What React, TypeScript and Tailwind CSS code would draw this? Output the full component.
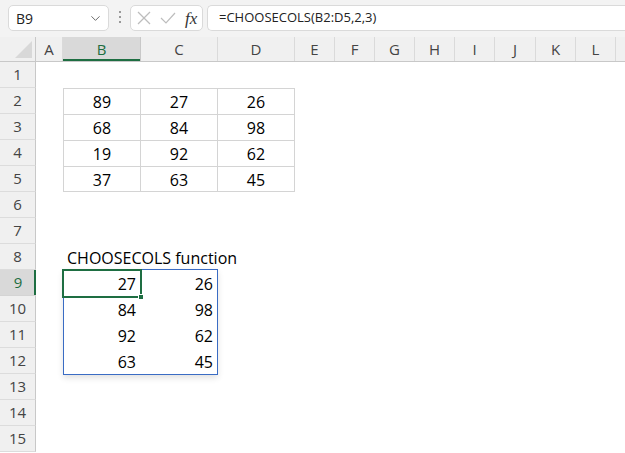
import { ChevronDown } from "lucide-react";

const cols = [
  { id: "A", w: "w-[27px]" },
  { id: "B", w: "w-[78px]" },
  { id: "C", w: "w-[77px]" },
  { id: "D", w: "w-[77px]" },
  { id: "E", w: "w-[40px]" },
  { id: "F", w: "w-[40px]" },
  { id: "G", w: "w-[40px]" },
  { id: "H", w: "w-[40px]" },
  { id: "I", w: "w-[40px]" },
  { id: "J", w: "w-[41px]" },
  { id: "K", w: "w-[40px]" },
  { id: "L", w: "w-[40px]" },
  { id: "", w: "w-[40px]" },
];

// source table B2:D5
const table: Record<number, string[]> = {
  2: ["89", "27", "26"],
  3: ["68", "84", "98"],
  4: ["19", "92", "62"],
  5: ["37", "63", "45"],
};

// spilled result B9:C12
const spill: Record<number, string[]> = {
  9: ["27", "26"],
  10: ["84", "98"],
  11: ["92", "62"],
  12: ["63", "45"],
};

const rows = Array.from({ length: 15 }, (_, i) => i + 1);

function Cell({ row, col }: { row: number; col: number }) {
  const c = cols[col];
  const inTable = table[row] && col >= 1 && col <= 3;
  const inSpill = spill[row] && col >= 1 && col <= 2;
  const borders = inTable
    ? `border-r border-t border-[#d4d4d4] ${col === 1 ? "border-l" : ""} ${row === 5 ? "border-b" : ""}`
    : "";

  if (row === 8 && col === 1) {
    return (
      <div className={`${c.w} h-[26px] shrink-0 relative`}>
        <span className="absolute left-[4px] top-[2px] whitespace-nowrap text-[16px] text-black">CHOOSECOLS function</span>
      </div>
    );
  }

  return (
    <div className={`${c.w} h-[26px] shrink-0 flex items-center pt-[1px] text-[16px] text-black ${borders} ${inTable ? "justify-center" : "justify-end pr-[5px]"}`}>
      {inTable && table[row][col - 1]}
      {inSpill && spill[row][col - 1]}
    </div>
  );
}

export default function App() {
  return (
    <div className="w-[625px] h-[453px] overflow-hidden bg-white font-['Open_Sans',sans-serif]">
      {/* Formula bar */}
      <div className="h-[37px] bg-[#f3f3f3] flex items-start pt-[5px]">
        <div className="ml-[8px] w-[101px] h-[26px] bg-white border border-[#dadada] rounded-[5px] flex items-center justify-between pl-[7px] pr-[5px]">
          <span className="text-[14px] text-[#222]">B9</span>
          <ChevronDown size={15} strokeWidth={1.4} className="text-[#555]" />
        </div>
        <div className="ml-[10px] mt-[6px] flex flex-col gap-[3px]">
          <div className="w-[2px] h-[2px] bg-[#999]" />
          <div className="w-[2px] h-[2px] bg-[#999]" />
          <div className="w-[2px] h-[2px] bg-[#999]" />
        </div>
        <div className="ml-[9px] w-[73px] h-[26px] bg-white border border-[#dadada] rounded-[5px] flex items-center pl-[6px]">
          <svg width="14" height="14" viewBox="0 0 14 14" fill="none" stroke="#bdbdbd" strokeWidth="1.2">
            <line x1="1" y1="1" x2="13" y2="13" />
            <line x1="13" y1="1" x2="1" y2="13" />
          </svg>
          <svg width="16" height="12" viewBox="0 0 16 12" fill="none" stroke="#bdbdbd" strokeWidth="1.2" className="ml-[9px]">
            <polyline points="1,6 6,11 15,1" />
          </svg>
          <span className="ml-[9px] font-['Liberation_Serif',serif] italic text-[17px] text-[#333] leading-none">fx</span>
        </div>
        <div className="ml-[4px] flex-1 h-[26px] bg-white border border-r-0 border-[#dadada] rounded-l-[5px] flex items-center pl-[11px]">
          <span className="text-[13px] text-[#222]">=CHOOSECOLS(B2:D5,2,3)</span>
        </div>
      </div>

      {/* Sheet */}
      <div className="relative">
        {/* Column headers */}
        <div className="flex h-[25px] bg-[#f0f0f0] border-b border-[#c8c8c8]">
          <div className="w-[36px] shrink-0 border-r border-[#c8c8c8] flex items-end justify-end pr-[3px] pb-[3px]">
            <svg width="17" height="17" viewBox="0 0 17 17">
              <polygon points="17,0 17,17 0,17" fill="#d8d8d8" />
            </svg>
          </div>
          {cols.map((c, i) => (
            <div
              key={i}
              className={`${c.w} shrink-0 flex items-center justify-center text-[15px] border-r ${
                c.id === "B"
                  ? "bg-[#d9d9d9] text-[#1e6e42] border-[#c8c8c8] shadow-[inset_0_-2px_0_#1e6e42]"
                  : "text-[#444] border-[#dadada]"
              }`}
            >
              {c.id}
            </div>
          ))}
        </div>

        {/* Rows */}
        {rows.map((r) => (
          <div key={r} className="flex h-[26px]">
            <div
              className={`w-[36px] shrink-0 flex items-center justify-center text-[15px] border-b ${
                r === 9
                  ? "bg-[#d9d9d9] text-[#1e6e42] border-[#d4d4d4] shadow-[inset_-2px_0_0_#1e6e42]"
                  : "bg-[#f0f0f0] text-[#444] border-[#dcdcdc] border-r border-r-[#c8c8c8]"
              }`}
            >
              {r}
            </div>
            {cols.map((c, i) => (
              <Cell key={i} row={r} col={i} />
            ))}
          </div>
        ))}

        {/* Spill range border */}
        <div className="absolute left-[63px] top-[232px] w-[155px] h-[106px] border border-[#3a6cc4] shadow-[0_3px_6px_rgba(0,0,0,0.12)] pointer-events-none" />
        {/* Active cell */}
        <div className="absolute left-[62px] top-[232px] w-[80px] h-[29px] border-2 border-[#1e6e42] pointer-events-none" />
        <div className="absolute left-[138px] top-[257px] w-[6px] h-[6px] bg-[#1e6e42] border border-white pointer-events-none" />
      </div>
    </div>
  );
}
